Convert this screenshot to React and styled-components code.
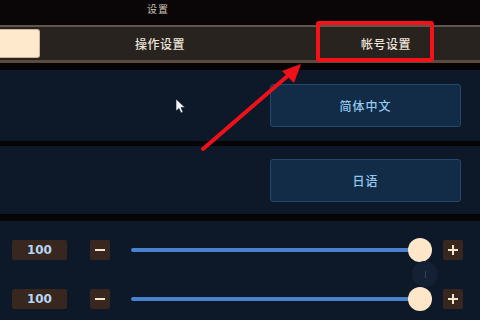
import React from 'react';
import styled, { createGlobalStyle } from 'styled-components';

const GlobalStyle = createGlobalStyle`
  html, body { margin: 0; padding: 0; background: #070405; }
  body { font-family: "Noto Sans CJK SC", "Noto Sans", sans-serif; }
`;

const Screen = styled.div`
  position: relative;
  width: 480px;
  height: 320px;
  overflow: hidden;
  background: #070405;
  display: flex;
  flex-direction: column;
`;

const TitleBar = styled.div`
  height: 25px;
  box-sizing: border-box;
  padding: 1px 0 0 147px;
  line-height: 16px;
  color: #cfc4b6;
  font-size: 10px;
  letter-spacing: 1px;
  background: #0a0506;
`;

const TabBar = styled.div`
  height: 33px;
  border-top: 2px solid #5f554c;
  border-bottom: 3px solid #5a4b3e;
  background: #29231f;
  display: flex;
  align-items: center;
  overflow: hidden;
`;

const ActiveTab = styled.div`
  flex-shrink: 0;
  width: 40px;
  height: 29px;
  background: #fee9cd;
  border-radius: 0 3px 3px 0;
  border: 1px solid #c9b69c;
  border-left: none;
  box-sizing: border-box;
`;

const Tab = styled.div`
  flex-shrink: 0;
  width: ${(p) => p.w}px;
  text-align: center;
  color: #ece4da;
  font-size: 12px;
  font-weight: 500;
  letter-spacing: 0.5px;
`;

const Body = styled.div`
  flex: 1;
  display: flex;
  flex-direction: column;
  gap: 5px;
  padding-top: 7px;
`;

const Row = styled.div`
  height: ${(p) => p.h}px;
  background: #0d1828;
  display: flex;
  align-items: center;
  justify-content: flex-end;
  padding-right: 19px;
`;

const LangButton = styled.div`
  width: 191px;
  height: 43px;
  box-sizing: border-box;
  background: #122c48;
  border: 1px solid #234a6d;
  border-radius: 3px;
  display: flex;
  align-items: center;
  justify-content: center;
  color: #94c8ee;
  font-size: 12px;
  font-weight: 500;
  letter-spacing: 1px;
`;

const SliderPanel = styled.div`
  flex: 1;
  margin-top: 2px;
  background: #0d1828;
  display: flex;
  flex-direction: column;
  gap: 29px;
  padding: 19px 17px 0 12px;
`;

const SliderRow = styled.div`
  height: 20px;
  display: flex;
  align-items: center;
`;

const ValueBox = styled.div`
  width: 55px;
  height: 20px;
  background: #37271f;
  border-radius: 2px;
  color: #b8d5f6;
  font-family: "DejaVu Sans", sans-serif;
  font-size: 12px;
  font-weight: 600;
  display: flex;
  align-items: center;
  justify-content: center;
`;

const StepButton = styled.div`
  width: 20px;
  height: 20px;
  background: #37271f;
  border-radius: 2px;
  margin-left: ${(p) => p.ml}px;
  display: flex;
  align-items: center;
  justify-content: center;
`;

const Track = styled.div`
  position: relative;
  width: 290px;
  height: 4px;
  margin-left: 21px;
  background: #4a82ce;
  border-radius: 2px;
`;

const Thumb = styled.div`
  position: absolute;
  right: -12px;
  top: -10px;
  width: 24px;
  height: 24px;
  border-radius: 50%;
  background: #fee6c9;
`;

const Ghost = styled.div`
  position: absolute;
  left: 412px;
  top: 261px;
  width: 26px;
  height: 26px;
  border-radius: 50%;
  background: #142033;
  display: flex;
  align-items: center;
  justify-content: center;
  &::after {
    content: '';
    width: 1px;
    height: 7px;
    background: #33455c;
  }
`;

const Highlight = styled.div`
  position: absolute;
  left: 316px;
  top: 21px;
  width: 118px;
  height: 41px;
  box-sizing: border-box;
  border: 4px solid #f2121a;
  border-radius: 3px;
`;

const Overlay = styled.svg`
  position: absolute;
  left: 0;
  top: 0;
  pointer-events: none;
`;

const Minus = () => (
  <svg width="12" height="12" viewBox="0 0 12 12">
    <rect x="1" y="5" width="10" height="2" fill="#f5e4cc" />
  </svg>
);

const Plus = () => (
  <svg width="12" height="12" viewBox="0 0 12 12">
    <rect x="1" y="5" width="10" height="2" fill="#f5e4cc" />
    <rect x="5" y="1" width="2" height="10" fill="#f5e4cc" />
  </svg>
);

const Slider = () => (
  <SliderRow>
    <ValueBox>100</ValueBox>
    <StepButton ml={23}>
      <Minus />
    </StepButton>
    <Track>
      <Thumb />
    </Track>
    <StepButton ml={23}>
      <Plus />
    </StepButton>
  </SliderRow>
);

export default function App() {
  return (
    <Screen>
      <GlobalStyle />
      <TitleBar>设置</TitleBar>
      <TabBar>
        <ActiveTab />
        <Tab w={240}>操作设置</Tab>
        <Tab w={212}>帐号设置</Tab>
      </TabBar>
      <Body>
        <Row h={71}>
          <LangButton>简体中文</LangButton>
        </Row>
        <Row h={68}>
          <LangButton>日语</LangButton>
        </Row>
        <SliderPanel>
          <Slider />
          <Slider />
        </SliderPanel>
      </Body>
      <Ghost />
      <Highlight />
      <Overlay width="480" height="320" viewBox="0 0 480 320">
        <line x1="203" y1="149" x2="291" y2="73" stroke="#f01018" strokeWidth="4" strokeLinecap="round" />
        <polygon points="301,64 282,71 294,83" fill="#f01018" />
        <path
          d="M176 99 L176 111 L179 108.5 L181 113 L183 112 L181 107.5 L185 107.5 Z"
          fill="#f4f6f8"
          stroke="#0d1828"
          strokeWidth="0.6"
        />
      </Overlay>
    </Screen>
  );
}
